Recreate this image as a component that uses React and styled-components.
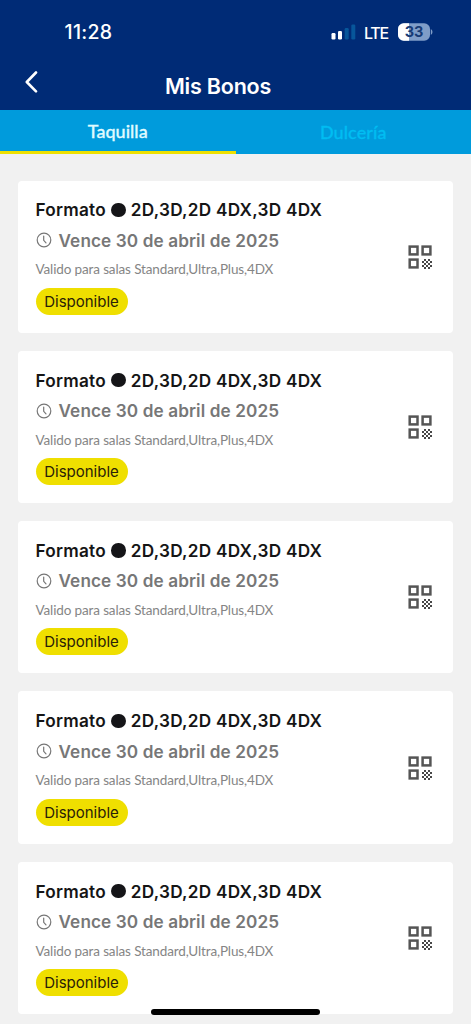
import React from "react";

import styled, { createGlobalStyle } from "styled-components";

const GlobalStyle = createGlobalStyle`
  * {
    box-sizing: border-box;
  }
  body {
    margin: 0;
    background: #f1f1f1;
    font-family: Inter, "Liberation Sans", sans-serif;
  }
`;

const StyledScreen = styled.div`
  position: relative;
  height: 1024px;
  overflow: hidden;
  background: #f1f1f1;
`;

const StyledHeader = styled.header`
  height: 110px;
  background: #002b76;
  color: white;
`;

const StyledStatusBar = styled.div`
  display: flex;
  justify-content: space-between;
  align-items: center;
  height: 64px;
  padding: 0 38.5px 0 64.5px;
`;

const StyledTime = styled.div`
  font-size: 19.5px;
  font-weight: 500;
  letter-spacing: 0.3px;
`;

const StyledStatusIcons = styled.div`
  display: flex;
  align-items: center;
`;

const StyledNetwork = styled.div`
  margin: 1px 9.5px 0 8px;
  font-size: 16px;
  font-weight: 500;
  letter-spacing: -1.2px;
`;

const StyledNavBar = styled.div`
  display: grid;
  grid-template-columns: 60px 1fr 95px;
  align-items: center;
  height: 44px;
`;

const StyledBackButton = styled.button`
  display: flex;
  padding: 0 0 8px 24px;
  border: 0;
  background: none;
`;

const StyledPageTitle = styled.h1`
  margin: 0;
  font-size: 21.5px;
  font-weight: 600;
  letter-spacing: -0.2px;
  text-align: center;
`;

const StyledTabs = styled.nav`
  display: flex;
  height: 44px;
  background: #009bdc;
`;

const StyledTab = styled.div`
  display: flex;
  flex: 1;
  justify-content: center;
  align-items: center;
  padding-top: ${({ $active }) => ($active ? "0" : "3px")};
  border-bottom: 3px solid ${({ $active }) => ($active ? "#efe000" : "#009bdc")};
  color: ${({ $active }) => ($active ? "#e0fbff" : "#00bdf2")};
  font-family: Lato, sans-serif;
  font-size: 18px;
  font-weight: 500;
  letter-spacing: ${({ $active }) => ($active ? "0" : "0.1px")};
  -webkit-text-stroke: 0.3px currentColor;
`;

const StyledList = styled.main`
  display: flex;
  flex-direction: column;
  gap: 18px;
  padding: 26.5px 18px 0;
`;

const StyledCard = styled.article`
  display: flex;
  justify-content: space-between;
  align-items: center;
  height: 152.3px;
  padding: 0 21px 0 17.5px;
  border-radius: 4px;
  background: white;
`;

const StyledInfo = styled.div`
  display: flex;
  flex-direction: column;
  align-items: flex-start;
  white-space: nowrap;
`;

const StyledFormat = styled.div`
  display: flex;
  align-items: center;
  height: 23px;
  color: #151515;
  font-size: 17.2px;
  font-weight: 600;
  letter-spacing: 0.25px;
`;

const StyledDot = styled.span`
  width: 14.5px;
  height: 14.5px;
  margin: 0 5.2px;
  border-radius: 50%;
  background: #151518;
`;

const StyledExpiry = styled.div`
  display: flex;
  align-items: center;
  gap: 7px;
  height: 24px;
  margin-top: 7px;
  color: #777;
  font-size: 17.2px;
  font-weight: 600;
  letter-spacing: 0.1px;
`;

const StyledRooms = styled.div`
  height: 20px;
  margin-top: 7px;
  color: #858585;
  font-family: Lato, sans-serif;
  font-size: 13.5px;
  line-height: 20px;
  letter-spacing: -0.13px;
`;

const StyledBadge = styled.div`
  display: flex;
  justify-content: center;
  align-items: center;
  width: 92px;
  height: 27px;
  margin-top: 8.5px;
  border-radius: 14px;
  background: #efdf00;
  color: #2a2108;
  font-size: 15px;
`;

const StyledHomeIndicator = styled.div`
  position: absolute;
  bottom: 9px;
  left: 151px;
  width: 169px;
  height: 6px;
  border-radius: 3px;
  background: black;
`;

const SignalIcon = () => (
  <svg width="25" height="16" viewBox="0 0 25 16">
    <rect x="0.5" y="9" width="4" height="6.5" rx="1.2" fill="white" />
    <rect x="7" y="7" width="4" height="8.5" rx="1.2" fill="white" />
    <rect x="13.7" y="4" width="4" height="11.5" rx="1.2" fill="#07569a" />
    <rect x="20.3" y="0.5" width="4" height="15" rx="1.2" fill="#07569a" />
  </svg>
);

const BatteryIcon = () => (
  <svg width="35" height="18" viewBox="0 0 35 18">
    <rect width="32" height="17.5" y="0.2" rx="5.8" fill="#7f9dc8" />
    <path d="M5.8.2H11v17.5H5.8A5.8 5.8 0 0 1 0 11.9V6A5.8 5.8 0 0 1 5.8.2Z" fill="white" />
    <path d="M32.8 6q1.7 1 1.7 3t-1.7 3Z" fill="#7f9dc8" />
    <text
      x="16"
      y="14.3"
      textAnchor="middle"
      fontFamily="Inter, sans-serif"
      fontSize="14.5"
      fontWeight="700"
      fill="#173b75"
    >
      33
    </text>
  </svg>
);

const ClockIcon = () => (
  <svg width="16" height="16" viewBox="0 0 16 16" fill="none" stroke="#777" strokeLinecap="round">
    <circle cx="8" cy="8" r="6.8" strokeWidth="1.2" />
    <path d="M7.7 4v4.3l2.3 2.5" strokeWidth="1.2" />
  </svg>
);

const BackIcon = () => (
  <svg width="15" height="22" viewBox="0 0 15 22" fill="none" stroke="white">
    <path d="M12 1.5 2.8 11l9.2 9.3" strokeWidth="2.6" strokeLinecap="round" strokeLinejoin="round" />
  </svg>
);

// odd cells of a 5x5 board
const qrCells = [...Array(25).keys()].filter((n) => n % 2 === 1);

const QrIcon = () => (
  <svg width="24" height="24" viewBox="0 0 24 24" fill="#484848">
    <g fill="none" stroke="#555" strokeWidth="2.5">
      <rect x="1.7" y="1.6" width="7.8" height="7.8" />
      <rect x="14.6" y="1.6" width="7.8" height="7.8" />
      <rect x="1.7" y="14.6" width="7.8" height="7.8" />
    </g>
    <g shapeRendering="crispEdges">
      {qrCells.map((n) => (
        <rect
          key={n}
          x={14 + (n % 5) * 2}
          y={14 + Math.floor(n / 5) * 2}
          width="2"
          height="2"
        />
      ))}
    </g>
  </svg>
);

const bonos = [1, 2, 3, 4, 5].map((id) => ({
  id,
  formatos: "2D,3D,2D 4DX,3D 4DX",
  vence: "30 de abril de 2025",
  salas: "Standard,Ultra,Plus,4DX",
  estado: "Disponible",
}));

const BonoCard = ({ bono }) => {
  return (
    <StyledCard>
      <StyledInfo>
        <StyledFormat>
          Formato
          <StyledDot />
          {bono.formatos}
        </StyledFormat>
        <StyledExpiry>
          <ClockIcon />
          <span>Vence {bono.vence}</span>
        </StyledExpiry>
        <StyledRooms>Valido para salas {bono.salas}</StyledRooms>
        <StyledBadge>{bono.estado}</StyledBadge>
      </StyledInfo>
      <QrIcon />
    </StyledCard>
  );
};

const App = () => {
  return (
    <StyledScreen>
      <GlobalStyle />
      <StyledHeader>
        <StyledStatusBar>
          <StyledTime>11:28</StyledTime>
          <StyledStatusIcons>
            <SignalIcon />
            <StyledNetwork>LTE</StyledNetwork>
            <BatteryIcon />
          </StyledStatusIcons>
        </StyledStatusBar>
        <StyledNavBar>
          <StyledBackButton aria-label="Volver">
            <BackIcon />
          </StyledBackButton>
          <StyledPageTitle>Mis Bonos</StyledPageTitle>
        </StyledNavBar>
      </StyledHeader>
      <StyledTabs>
        <StyledTab $active>Taquilla</StyledTab>
        <StyledTab>Dulcería</StyledTab>
      </StyledTabs>
      <StyledList>
        {bonos.map((bono) => (
          <BonoCard key={bono.id} bono={bono} />
        ))}
      </StyledList>
      <StyledHomeIndicator />
    </StyledScreen>
  );
};

export default App;
